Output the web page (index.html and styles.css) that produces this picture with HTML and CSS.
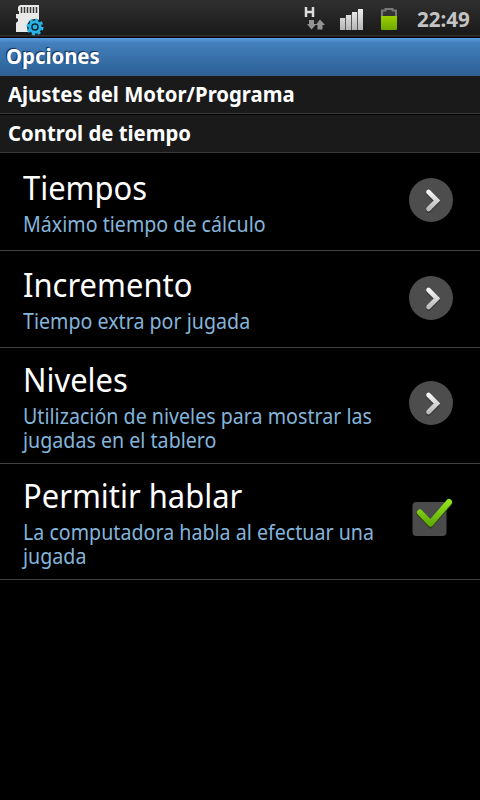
FILE: index.html
```html
<!DOCTYPE html>
<html lang="es">
<head>
<meta charset="utf-8">
<title>Opciones</title>
<link rel="stylesheet" href="styles.css">
</head>
<body>
<div class="status">
  <svg class="sd" width="32" height="32" viewBox="0 0 32 32">
    <path d="M5 1H24V28H1V19L3 17V15L1 14V10H4V7H3V3Z" fill="#e9e9e7"/>
    <path d="M6.500 3v6M9.500 3v6M12.500 3v6M15.500 3v6M18.500 3v6M21.500 3v6" stroke="#383838" stroke-width="1.500"/>
    <circle cx="20" cy="23" r="8" fill="#142630"/>
    <circle cx="20" cy="23" r="7.300" fill="none" stroke="#28b4e4" stroke-width="2.600" stroke-dasharray="3 2.730"/>
    <circle cx="20" cy="23" r="5.200" fill="none" stroke="#28b4e4" stroke-width="2.800"/>
    <circle cx="20" cy="23" r="2.300" fill="#28b4e4"/>
  </svg>
  <svg class="net" width="24" height="26" viewBox="0 0 24 26">
    <path d="M2 1V11M9 1V11M2 6H9" stroke="#ddd" stroke-width="2.500" fill="none"/>
    <path d="M5 14H10V18H12.500L7.500 23.500L3 18H5ZM13.500 23.500H18.500V19H21L16 13.500L11.800 19H13.500Z" fill="#939393"/>
  </svg>
  <svg class="signal" width="25" height="23" viewBox="0 0 25 23">
    <defs><linearGradient id="bars" x2="0" y2="1"><stop stop-color="#eee"/><stop offset="1" stop-color="#b5b5b5"/></linearGradient></defs>
    <path d="M1 10H6V22H1ZM7 7H12V22H7ZM13 4H18V22H13ZM19 1H24V22H19Z" fill="url(#bars)"/>
    <path d="M6.500 9V22M12.500 6V22M18.500 3V22" stroke="#555"/>
  </svg>
  <svg class="battery" width="18" height="24" viewBox="0 0 18 24">
    <defs><linearGradient id="charge" x2="0" y2="1"><stop stop-color="#9ad000"/><stop offset="1" stop-color="#6fa700"/></linearGradient></defs>
    <path d="M2 9V3.500H5.500V2H12.500V3.500H16V9" fill="#333" stroke="#777" stroke-width="2"/>
    <path d="M1 9H17V22Q17 23 16 23H2Q1 23 1 22Z" fill="url(#charge)"/>
  </svg>
  <span class="clock">22:49</span>
</div>
<h1 class="bar"><span class="bold">Opciones</span></h1>
<h2 class="section"><span class="bold">Ajustes del Motor/Programa</span></h2>
<h2 class="section second"><span class="bold">Control de tiempo</span></h2>
<div class="row first">
  <div class="text"><div class="title">Tiempos</div><div class="sub">Máximo tiempo de cálculo</div></div>
  <svg class="arrow" width="46" height="46" viewBox="0 0 46 46">
    <defs><linearGradient id="chev" x2="0" y2="1"><stop stop-color="#f4f4f4"/><stop offset="1" stop-color="#bbb"/></linearGradient></defs>
    <circle cx="23" cy="23" r="22" fill="#4d4d4d"/><path d="M20.500 15L29 23.500L20.500 32" transform="translate(0 1.500)" stroke="#333" stroke-width="4.600" stroke-linecap="round" fill="none"/><path d="M20.500 15L29 23.500L20.500 32" stroke="url(#chev)" stroke-width="4.600" stroke-linecap="round" fill="none"/>
  </svg>
</div>
<div class="row">
  <div class="text"><div class="title">Incremento</div><div class="sub">Tiempo extra por jugada</div></div>
  <svg class="arrow" width="46" height="46" viewBox="0 0 46 46"><circle cx="23" cy="23" r="22" fill="#4d4d4d"/><path d="M20.500 15L29 23.500L20.500 32" transform="translate(0 1.500)" stroke="#333" stroke-width="4.600" stroke-linecap="round" fill="none"/><path d="M20.500 15L29 23.500L20.500 32" stroke="url(#chev)" stroke-width="4.600" stroke-linecap="round" fill="none"/></svg>
</div>
<div class="row tall">
  <div class="text"><div class="title">Niveles</div><div class="sub">Utilización de niveles para mostrar las<br>jugadas en el tablero</div></div>
  <svg class="arrow" width="46" height="46" viewBox="0 0 46 46"><circle cx="23" cy="23" r="22" fill="#4d4d4d"/><path d="M20.500 15L29 23.500L20.500 32" transform="translate(0 1.500)" stroke="#333" stroke-width="4.600" stroke-linecap="round" fill="none"/><path d="M20.500 15L29 23.500L20.500 32" stroke="url(#chev)" stroke-width="4.600" stroke-linecap="round" fill="none"/></svg>
</div>
<div class="row tall">
  <div class="text"><div class="title">Permitir hablar</div><div class="sub">La computadora habla al efectuar una<br>jugada</div></div>
  <svg class="check" width="46" height="46" viewBox="0 0 46 46">
    <defs><linearGradient id="tick" x2="0" y2="1"><stop stop-color="#8ee21c"/><stop offset="1" stop-color="#64ad08"/></linearGradient></defs>
    <rect x="4.500" y="6" width="34" height="34" rx="4" fill="#4b4b4b"/>
    <path d="M12 16.500L22.500 27.500L41 6" transform="translate(0 1)" fill="none" stroke="#2d4217" stroke-width="6.500" stroke-linecap="round"/>
    <path d="M12 16.500L22.500 27.500L41 6" fill="none" stroke="url(#tick)" stroke-width="6" stroke-linecap="round" stroke-linejoin="round"/>
  </svg>
</div>
</body>
</html>
```
FILE: styles.css
```css
* { box-sizing: border-box; }
body {
  margin: 0;
  width: 480px;
  height: 800px;
  overflow: hidden;
  background: #000;
  color: #fff;
  font-family: "Noto Sans", "Open Sans", sans-serif;
}
svg { display: block; flex: none; }
.status {
  display: flex;
  align-items: flex-start;
  height: 38px;
  background: linear-gradient(#303030, #191919 35px, #51453c 36px, #000 37px);
}
.sd { margin: 4px 0 0 15px; }
.net { margin: 6px 0 0 257px; }
.signal { margin: 8px 0 0 11px; }
.battery { margin: 7px 0 0 16px; }
.clock {
  margin-left: 19px;
  font-size: 21px;
  font-weight: 700;
  line-height: 38px;
  color: #c3c3c3;
  transform: scaleX(.98);
  transform-origin: 0 0;
}
.bar, .section {
  margin: 0;
  font-size: 21px;
  font-weight: 700;
  line-height: 37px;
  height: 38px;
}
.bar {
  padding-left: 6px;
  background: linear-gradient(#5c9bdd, #427fbd 5px, #2d6095 37px, #40617c);
  text-shadow: -1px -1px 1px #152f4b;
}
.section {
  padding-left: 8px;
  background: #1a1a1a;
  border-bottom: 1px solid #383838;
}
.section.second { margin-top: 1px; }
.bold {
  display: inline-block;
  transform: scaleX(.967);
  transform-origin: 0 0;
}
.row {
  display: flex;
  align-items: center;
  justify-content: space-between;
  height: 97px;
  padding: 0 26px 0 23px;
  border-bottom: 1px solid #424242;
}
.row.first { height: 98px; }
.row.tall { height: 116px; }
.text {
  width: 350px;
  white-space: nowrap;
}
.title {
  font-size: 33px;
  line-height: 38px;
  transform: scaleX(.937);
  transform-origin: 0 0;
}
.sub {
  margin-top: 4px;
  font-size: 22px;
  line-height: 24px;
  color: #84b5db;
  transform: scaleX(.893);
  transform-origin: 0 0;
}
.arrow { margin-top: -3px; }
.tall .arrow { margin-top: -5px; }
.check { margin-top: -6px; }
```
